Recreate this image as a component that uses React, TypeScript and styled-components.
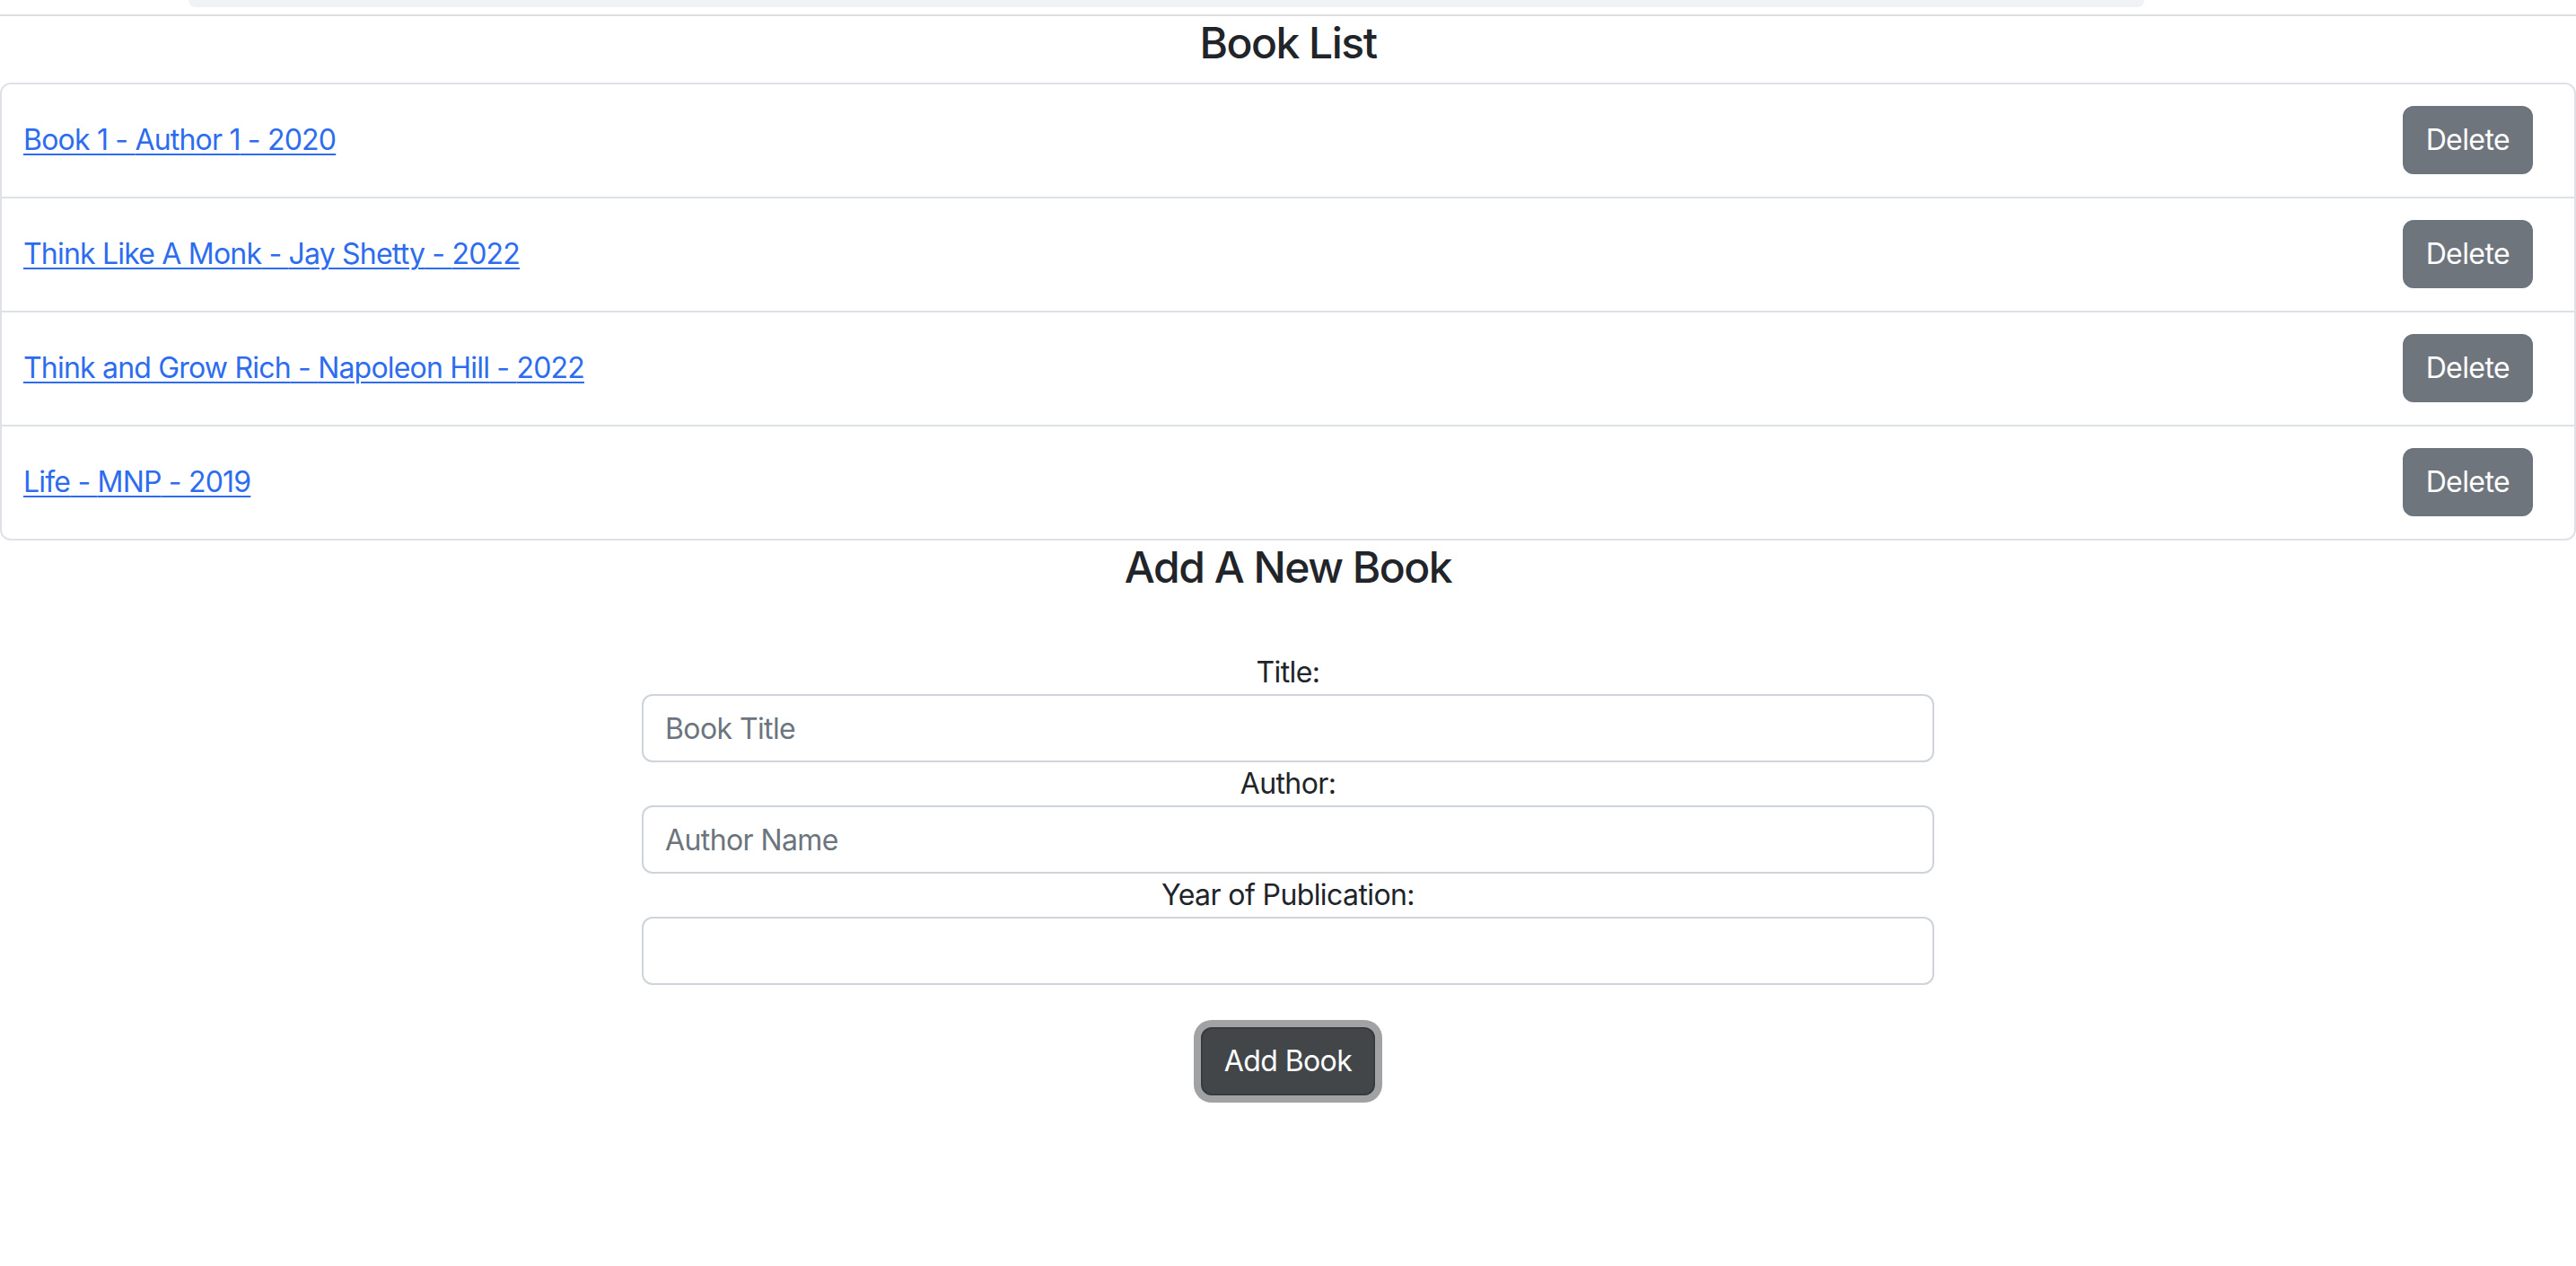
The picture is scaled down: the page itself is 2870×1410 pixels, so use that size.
import React, { useState } from 'react';
import styled, { createGlobalStyle } from 'styled-components';

const GlobalStyle = createGlobalStyle`
  html, body {
    margin: 0;
    padding: 0;
    background: #fff;
  }
  body {
    font-family: Inter, 'Noto Sans', sans-serif;
    color: #212529;
    overflow: hidden;
  }
  * {
    box-sizing: border-box;
  }
`;

const Page = styled.div`
  width: 2870px;
  min-height: 1410px;
  display: flex;
  flex-direction: column;
`;

const TopBar = styled.div`
  margin-left: 210px;
  width: 2179px;
  height: 8px;
  background-color: #f1f2f4;
  border-radius: 0 0 24px 24px;
`;

const Rule = styled.hr`
  margin: 8px 0 0;
  border: none;
  height: 2px;
  background-color: #dedede;
`;

const Heading = styled.h4<{ $top?: number }>`
  margin: ${p => p.$top ?? 0}px 0 16px;
  font-size: 48px;
  font-weight: 500;
  line-height: 57px;
  text-align: center;
  letter-spacing: -1.5px;
`;

const List = styled.ul`
  list-style: none;
  margin: 0;
  padding: 0;
  border: 2px solid #dee2e6;
  border-radius: 12px;
`;

const Item = styled.li`
  display: flex;
  align-items: center;
  justify-content: space-between;
  padding: 24px 46px 25px 24px;
  & + & {
    border-top: 2px solid #dee2e6;
  }
`;

const BookLink = styled.a`
  font-size: 32px;
  line-height: 48px;
  color: #2d6cef;
  text-decoration: underline;
  text-decoration-thickness: 2px;
  text-underline-offset: 4px;
  letter-spacing: -0.8px;
  cursor: pointer;
`;

const Button = styled.button<{ $variant: 'secondary' | 'dark' }>`
  font-family: inherit;
  font-size: 32px;
  line-height: 48px;
  padding: 12px 24px;
  border: 2px solid ${p => (p.$variant === 'dark' ? '#373b3e' : '#6c757d')};
  border-radius: 12px;
  color: #fff;
  background-color: ${p => (p.$variant === 'dark' ? '#424649' : '#6f757d')};
  box-shadow: ${p => (p.$variant === 'dark' ? '0 0 0 8px #a1a2a4' : 'none')};
  letter-spacing: -0.6px;
  cursor: pointer;
`;

const Form = styled.form`
  display: flex;
  flex-direction: column;
  align-items: center;
  padding-top: 49px;
`;

const Label = styled.label`
  font-size: 32px;
  line-height: 48px;
  text-align: center;
  letter-spacing: -0.6px;
`;

const Input = styled.input`
  width: 1440px;
  height: 76px;
  padding: 12px 24px;
  font-family: inherit;
  font-size: 32px;
  color: #212529;
  border: 2px solid #ced4da;
  border-radius: 12px;
  letter-spacing: -0.6px;
  &::placeholder {
    color: #6c757d;
  }
`;

const SubmitRow = styled.div`
  margin-top: 47px;
`;

interface Book {
  title: string;
  author: string;
  year: number;
}

const initialBooks: Book[] = [
  { title: 'Book 1', author: 'Author 1', year: 2020 },
  { title: 'Think Like A Monk', author: 'Jay Shetty', year: 2022 },
  { title: 'Think and Grow Rich', author: 'Napoleon Hill', year: 2022 },
  { title: 'Life', author: 'MNP', year: 2019 },
];

const App: React.FC = () => {
  const [books, setBooks] = useState<Book[]>(initialBooks);

  const handleDelete = (index: number) => {
    setBooks(books.filter((_, i) => i !== index));
  };

  return (
    <Page>
      <GlobalStyle />
      <TopBar />
      <Rule />
      <Heading $top={1}>Book List</Heading>
      <List>
        {books.map((book, index) => (
          <Item key={index}>
            <BookLink>
              {book.title} - {book.author} - {book.year}
            </BookLink>
            <Button $variant="secondary" onClick={() => handleDelete(index)}>
              Delete
            </Button>
          </Item>
        ))}
      </List>
      <Heading $top={1}>Add A New Book</Heading>
      <Form onSubmit={e => e.preventDefault()}>
        <Label htmlFor="title">Title:</Label>
        <Input id="title" placeholder="Book Title" />
        <Label htmlFor="author">Author:</Label>
        <Input id="author" placeholder="Author Name" />
        <Label htmlFor="year">Year of Publication:</Label>
        <Input id="year" />
        <SubmitRow>
          <Button $variant="dark" type="submit">Add Book</Button>
        </SubmitRow>
      </Form>
    </Page>
  );
};

export default App;
